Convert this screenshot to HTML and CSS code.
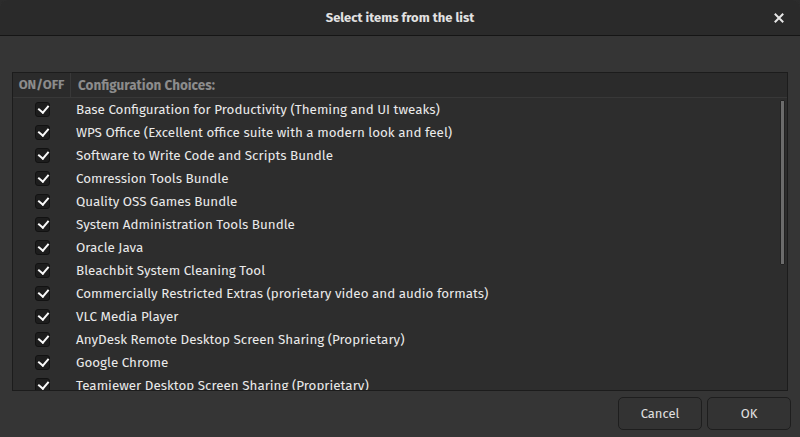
FILE: index.html
```html
<!DOCTYPE html>
<html>
<head>
<meta charset="utf-8">
<link rel="stylesheet" href="styles.css">
</head>
<body>
<div class="window">
  <div class="titlebar">
    <span class="title">Select items from the list</span>
    <span class="close">
      <svg width="10" height="10" viewBox="0 0 10 10"><path d="M1.5 1.5 L8.5 8.5 M8.5 1.5 L1.5 8.5" stroke="#e6e6e6" stroke-width="2" stroke-linecap="square"/></svg>
    </span>
  </div>
  <div class="content">
    <div class="list">
      <div class="header">
        <div class="col-check">ON/OFF</div>
        <div class="col-text">Configuration Choices:</div>
      </div>
      <div class="rows">
        <div class="row"><div class="col-check"><span class="cb"></span></div><div class="col-text">Base Configuration for Productivity (Theming and UI tweaks)</div></div>
        <div class="row"><div class="col-check"><span class="cb"></span></div><div class="col-text">WPS Office (Excellent office suite with a modern look and feel)</div></div>
        <div class="row"><div class="col-check"><span class="cb"></span></div><div class="col-text">Software to Write Code and Scripts Bundle</div></div>
        <div class="row"><div class="col-check"><span class="cb"></span></div><div class="col-text">Comression Tools Bundle</div></div>
        <div class="row"><div class="col-check"><span class="cb"></span></div><div class="col-text">Quality OSS Games Bundle</div></div>
        <div class="row"><div class="col-check"><span class="cb"></span></div><div class="col-text">System Administration Tools Bundle</div></div>
        <div class="row"><div class="col-check"><span class="cb"></span></div><div class="col-text">Oracle Java</div></div>
        <div class="row"><div class="col-check"><span class="cb"></span></div><div class="col-text">Bleachbit System Cleaning Tool</div></div>
        <div class="row"><div class="col-check"><span class="cb"></span></div><div class="col-text">Commercially Restricted Extras (prorietary video and audio formats)</div></div>
        <div class="row"><div class="col-check"><span class="cb"></span></div><div class="col-text">VLC Media Player</div></div>
        <div class="row"><div class="col-check"><span class="cb"></span></div><div class="col-text">AnyDesk Remote Desktop Screen Sharing (Proprietary)</div></div>
        <div class="row"><div class="col-check"><span class="cb"></span></div><div class="col-text">Google Chrome</div></div>
        <div class="row"><div class="col-check"><span class="cb"></span></div><div class="col-text">Teamiewer Desktop Screen Sharing (Proprietary)</div></div>
      </div>
      <div class="scrollbar"></div>
    </div>
    <div class="buttons">
      <button class="btn">Cancel</button>
      <button class="btn">OK</button>
    </div>
  </div>
</div>
</body>
</html>
```
FILE: styles.css
```css
html, body {
  margin: 0;
  padding: 0;
  background: #2c2c2c;
}
body {
  font-family: "Fira Sans", "Open Sans", "Noto Sans", sans-serif;
  font-size: 13px;
  color: #e8e8e8;
  width: 800px;
  height: 437px;
  overflow: hidden;
}
.window {
  display: flex;
  flex-direction: column;
  height: 437px;
  background: #353535;
  border-radius: 8px 8px 0 0;
  overflow: hidden;
}
.titlebar {
  height: 35px;
  flex: none;
  background: #2a2a2a;
  border-bottom: 1px solid #151515;
  display: flex;
  align-items: center;
  justify-content: center;
  position: relative;
}
.title {
  font-weight: 700;
  font-size: 13px;
  color: #e2e2e2;
}
.close {
  position: absolute;
  right: 16px;
  top: 13px;
  width: 10px;
  height: 10px;
  display: flex;
}
.content {
  flex: 1;
  display: flex;
  flex-direction: column;
  padding: 36px 12px 8px 12px;
}
.list {
  position: relative;
  height: 317px;
  flex: none;
  border: 1px solid #1c1c1c;
  background: #2d2d2d;
  overflow: hidden;
}
.header {
  display: flex;
  height: 24px;
  align-items: center;
  background: #2b2b2b;
  border-bottom: 1px solid #383838;
  color: #8c8c8c;
  font-weight: 700;
  font-size: 13.5px;
}
.header .col-check {
  border-right: 1px solid #383838;
  height: 24px;
  line-height: 24px;
  font-size: 13px;
}
.header .col-text {
  padding-left: 7px;
}
.col-check {
  width: 58px;
  flex: none;
  display: flex;
  justify-content: center;
  align-items: center;
  box-sizing: border-box;
}
.col-text {
  padding-left: 5px;
  white-space: nowrap;
}
.row {
  display: flex;
  height: 23px;
  align-items: center;
}
.row .col-text {
  padding-left: 5px;
  color: #eaeaea;
  font-size: 13.4px;
}
.cb {
  width: 15px;
  height: 15px;
  box-sizing: border-box;
  border: 1px solid #121212;
  border-radius: 3px;
  background: #1d1d1d;
  position: relative;
}
.cb::after {
  content: "";
  position: absolute;
  width: 5px;
  height: 8px;
  border-right: 2.5px solid #fafafa;
  border-bottom: 2.5px solid #fafafa;
  transform: rotate(40deg);
  transform-origin: center;
  left: 4px;
  top: 0px;
}
.scrollbar {
  position: absolute;
  right: 2px;
  top: 27px;
  width: 3px;
  height: 163px;
  background: #6c6c6c;
  border: 1px solid #222;
  border-radius: 1px;
}
.buttons {
  display: flex;
  justify-content: flex-end;
  gap: 5px;
  margin-top: 6px;
  margin-right: -3px;
}
.btn {
  width: 84px;
  height: 33px;
  font-family: inherit;
  font-size: 13px;
  color: #e0e0e0;
  background: #333333;
  border: 1px solid #1e1e1e;
  border-radius: 5px;
}
```
